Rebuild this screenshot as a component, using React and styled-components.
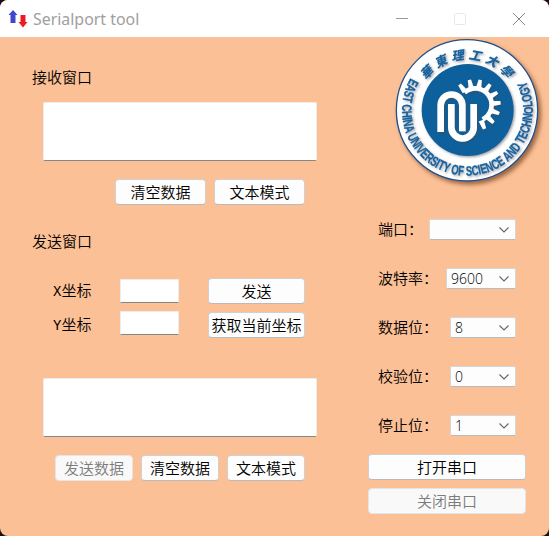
import React from "react";
import styled, { createGlobalStyle } from "styled-components";

const Global = createGlobalStyle`
  * { box-sizing: border-box; }
  html, body { margin: 0; background: #1b0f10; overflow: hidden; }
  button { font: inherit; }
`;

const Window = styled.div`
  width: 549px;
  height: 536px;
  border-radius: 8px;
  overflow: hidden;
  display: flex;
  flex-direction: column;
  background: #fcc096;
  color: #000;
  font: 350 15px/20px "Noto Sans CJK SC", sans-serif;
`;

const TitleBar = styled.header`
  height: 37px;
  flex: none;
  display: flex;
  align-items: center;
  background: #fff;
  padding: 0 1px 0 8px;
`;

const Title = styled.h1`
  margin: 0 auto 0 5px;
  font: 400 15.9px/20px "Noto Sans", sans-serif;
  color: #a0a0a0;
`;

const Caption = styled.div`
  width: 58.500px;
  display: flex;
  justify-content: center;
`;

const Body = styled.main`
  flex: 1;
  display: flex;
  justify-content: space-between;
`;

const Left = styled.section`
  width: 317px;
  padding-top: 31px;
  display: flex;
  flex-direction: column;
`;

const Right = styled.aside`
  width: 181px;
  display: flex;
  flex-direction: column;
`;

const Heading = styled.div`
  margin: ${(p) => p.$top || 0}px 0 0 32px;
  height: 20px;
  line-height: 18px;
`;

const TextArea = styled.div`
  width: 274px;
  height: 59px;
  margin: ${(p) => p.$top}px 0 0 43px;
  background: #fff;
  border: 1px solid #ececec;
  border-bottom-color: #868686;
  border-radius: 2px;
`;

const ButtonRow = styled.div`
  display: flex;
  justify-content: flex-end;
  gap: 8px;
  margin: 18px 12px 0 0;
`;

const Button = styled.button`
  width: ${(p) => p.$w}px;
  height: 26px;
  padding: 0;
  line-height: 22px;
  white-space: nowrap;
  color: #000;
  background: #fdfdfd;
  border: 1px solid #d0d0d0;
  border-bottom-color: #bababa;
  border-radius: 4px;
  &:disabled {
    color: #7c7c7c;
    background: #f9f9f9;
    border-color: #e5e5e5;
  }
`;

const Coordinates = styled.div`
  margin: 26px 12px 0 53px;
  display: flex;
  flex-direction: column;
  gap: 8px;
`;

const CoordinateRow = styled.div`
  height: 26px;
  display: flex;
  align-items: center;
`;

const Label = styled.label`
  width: ${(p) => p.$w}px;
  white-space: nowrap;
`;

const Axis = styled.span`
  display: inline-block;
  width: 8.500px;
  font: 400 14px/20px "Liberation Mono", monospace;
`;

const Input = styled.div`
  width: 59px;
  height: 24px;
  margin: ${(p) => p.$shift}px auto 0 0;
  background: #fff;
  border: 1px solid #ececec;
  border-bottom-color: #868686;
`;

const Settings = styled.div`
  margin: 27px 33px 0 10px;
  display: flex;
  flex-direction: column;
  gap: 28px;
`;

const Setting = styled.div`
  height: 21px;
  line-height: 19px;
  display: flex;
  align-items: flex-start;
  justify-content: space-between;
`;

const Select = styled.div`
  width: ${(p) => p.$w}px;
  height: 21px;
  padding: 0 5px 0 4px;
  display: flex;
  align-items: center;
  justify-content: space-between;
  font: 300 14px/19px "Open Sans", "Noto Sans", sans-serif;
  background: #fdfdfd;
  border: 1px solid #d6d6d6;
  border-bottom-color: #bababa;
  border-radius: 2px;
`;

const PortActions = styled.div`
  margin-top: 18px;
  display: flex;
  flex-direction: column;
  gap: 8px;
`;

const Emblem = styled.svg`
  display: block;
  flex: none;
  margin-left: 17px;
`;

const Chevron = () => (
  <svg width="12" height="8" viewBox="0 0 12 8" fill="none" stroke="#666" strokeWidth="1.1">
    <path d="M1.5 1.5 6 6l4.500-4.500" />
  </svg>
);

const teeth = [-127, -102.6, -78.2, -53.8, -29.4, -5, 19.4, 43.8, 68.2];

const UniversityEmblem = () => (
  <Emblem width="164" height="155" viewBox="0 6 492 465">
    <defs>
      <filter id="shade" x="-20%" y="-20%" width="150%" height="150%">
        <feDropShadow dx="8" dy="9" stdDeviation="6" floodColor="#70401c" floodOpacity=".7" />
      </filter>
      <filter id="soft" x="-20%" y="-20%" width="150%" height="150%">
        <feDropShadow dx="4" dy="4" stdDeviation="3" floodColor="#444" floodOpacity=".5" />
      </filter>
      <path id="upper" d="M94 226a153 153 0 0 1 306 0" />
      <path id="lower" d="M77 128A196 196 0 1 0 420 134" />
    </defs>
    <circle cx="246" cy="226" r="212" fill="#fff" stroke="#20518a" strokeWidth="4" filter="url(#shade)" />
    <circle cx="248" cy="225" r="138" fill="#0d609c" filter="url(#soft)" />
    <g fill="#15639f" filter="url(#soft)">
      <text fontFamily="Noto Sans CJK SC" fontWeight="900" fontStyle="italic" fontSize="37" letterSpacing="12">
        <textPath href="#upper" startOffset="96">華東理工大學</textPath>
      </text>
      <text fontFamily="Liberation Sans Narrow, Liberation Sans" fontWeight="700" fontSize="41" stroke="#15639f" textLength="808" lengthAdjust="spacingAndGlyphs">
        <textPath href="#lower" startOffset="1">EAST CHINA UNIVERSITY OF SCIENCE AND TECHNOLOGY</textPath>
      </text>
    </g>
    <g transform="translate(135 105)" filter="url(#soft)" fill="none" stroke="#fff" strokeWidth="20">
      <path d="M103.500 67.500A49 49 0 1 1 158 148" strokeWidth="14" />
      {teeth.map((angle) => (
        <path key={angle} d="M50-8 77-5V5L50 8Z" fill="#fff" stroke="none" transform={`translate(135 105) rotate(${angle})`} />
      ))}
      <path d="M32 186V106a32.500 32.500 0 0 1 65 0v78" />
      <path d="M64 102v70a33.500 33.500 0 0 0 67 0v-70" />
    </g>
  </Emblem>
);

export default function App() {
  return (
    <>
      <Global />
      <Window>
        <TitleBar>
          <svg width="20" height="18" viewBox="0 0 20 18">
            <path d="M5 0 9.500 5H7.500v8h-5V5h-2z" fill="#3f48cc" />
            <path d="M12.500 5h5v7h2L15 17.500 10.500 12h2z" fill="#ed1c24" />
          </svg>
          <Title>Serialport tool</Title>
          <Caption><svg width="12" height="12"><path d="M0 5.500h12" stroke="#999" /></svg></Caption>
          <Caption><svg width="12" height="12"><rect x=".5" y=".5" width="11" height="11" rx="1" fill="none" stroke="#e8e8e8" /></svg></Caption>
          <Caption><svg width="12" height="12"><path d="m0 0 12 12M12 0 0 12" stroke="#888" /></svg></Caption>
        </TitleBar>
        <Body>
          <Left>
            <Heading>接收窗口</Heading>
            <TextArea $top={14} />
            <ButtonRow>
              <Button $w={91}>清空数据</Button>
              <Button $w={91}>文本模式</Button>
            </ButtonRow>
            <Heading $top={27}>发送窗口</Heading>
            <Coordinates>
              <CoordinateRow>
                <Label $w={67}><Axis>X</Axis>坐标</Label>
                <Input $shift={0} />
                <Button $w={97}>发送</Button>
              </CoordinateRow>
              <CoordinateRow>
                <Label $w={67}><Axis>Y</Axis>坐标</Label>
                <Input $shift={-4} />
                <Button $w={97}>获取当前坐标</Button>
              </CoordinateRow>
            </Coordinates>
            <TextArea $top={40} />
            <ButtonRow>
              <Button $w={78} disabled>发送数据</Button>
              <Button $w={78}>清空数据</Button>
              <Button $w={78}>文本模式</Button>
            </ButtonRow>
          </Left>
          <Right>
            <UniversityEmblem />
            <Settings>
              <Setting><Label>端口：</Label><Select $w={87}><span /><Chevron /></Select></Setting>
              <Setting><Label>波特率：</Label><Select $w={70}>9600<Chevron /></Select></Setting>
              <Setting><Label>数据位：</Label><Select $w={66}>8<Chevron /></Select></Setting>
              <Setting><Label>校验位：</Label><Select $w={66}>0<Chevron /></Select></Setting>
              <Setting><Label>停止位：</Label><Select $w={66}>1<Chevron /></Select></Setting>
            </Settings>
            <PortActions>
              <Button $w={158}>打开串口</Button>
              <Button $w={158} disabled>关闭串口</Button>
            </PortActions>
          </Right>
        </Body>
      </Window>
    </>
  );
}
